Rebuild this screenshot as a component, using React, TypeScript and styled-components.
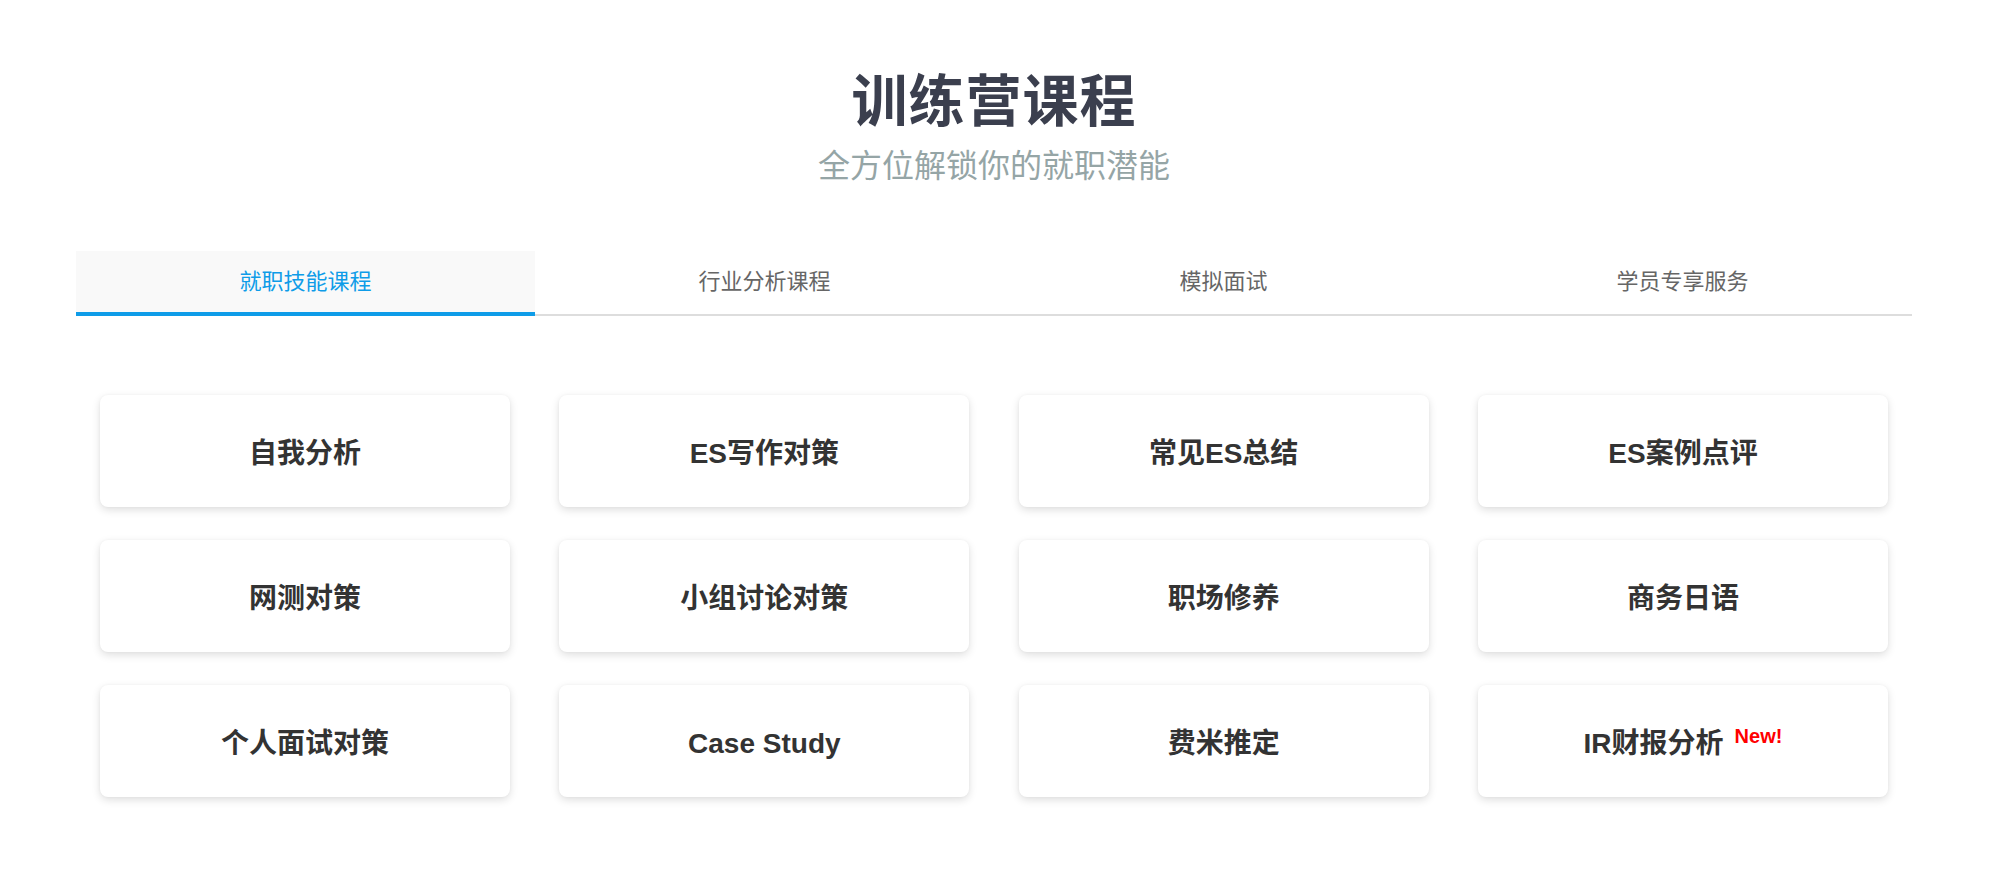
import React, { useState } from "react";
import styled, { createGlobalStyle } from "styled-components";

const GlobalStyle = createGlobalStyle`
  html, body {
    margin: 0;
    padding: 0;
    background: #ffffff;
  }
  body {
    font-family: "Noto Sans CJK SC", "Liberation Sans", sans-serif;
  }
  * { box-sizing: border-box; }
`;

const Page = styled.div`
  width: 1998px;
  padding: 68px 86px 60px 76px;
`;

const Header = styled.header`
  display: flex;
  flex-direction: column;
  align-items: center;
  gap: 10px;
`;

const Title = styled.h1`
  margin: 0;
  font-family: "Liberation Sans", "Noto Sans CJK SC", sans-serif;
  font-size: 56px;
  line-height: 68px;
  font-weight: 700;
  color: #3b3f4e;
  letter-spacing: 1px;
`;

const Subtitle = styled.p`
  margin: 0;
  font-family: "Liberation Sans", "Noto Sans CJK SC", sans-serif;
  font-size: 32px;
  line-height: 40px;
  font-weight: 400;
  color: #95a5a6;
`;

const TabBar = styled.nav`
  margin-top: 65px;
  display: grid;
  grid-template-columns: repeat(4, 1fr);
  border-bottom: 2px solid #dddddd;
`;

const Tab = styled.button<{ $active: boolean }>`
  height: 65px;
  margin-bottom: -2px;
  border: none;
  border-bottom: 4px solid ${(p) => (p.$active ? "#0e9ce8" : "transparent")};
  background: ${(p) => (p.$active ? "#f9f9f9" : "transparent")};
  color: ${(p) => (p.$active ? "#0e9ce8" : "#666666")};
  font-family: "Liberation Sans", "Noto Sans CJK SC", sans-serif;
  font-size: 22px;
  line-height: 30px;
  padding: 0;
  cursor: pointer;
`;

const Grid = styled.div`
  margin-top: 79px;
  padding: 0 24px;
  display: grid;
  grid-template-columns: repeat(4, 410px);
  justify-content: space-between;
  row-gap: 33px;
`;

const Card = styled.div`
  height: 112px;
  padding-top: 5px;
  border-radius: 8px;
  background: #ffffff;
  box-shadow: 0 3px 9px rgba(0, 0, 0, 0.13), 0 0 3px rgba(0, 0, 0, 0.04);
  display: flex;
  align-items: center;
  justify-content: center;
  gap: 11px;
`;

const CardLabel = styled.span`
  font-family: "Liberation Sans", "Noto Sans CJK SC", sans-serif;
  font-size: 28px;
  font-weight: 600;
  color: #333333;
  line-height: 36px;
`;

const Badge = styled.sup`
  font-family: "Liberation Sans", sans-serif;
  font-size: 20px;
  font-weight: 700;
  color: #ff0000;
  line-height: 20px;
  align-self: center;
  transform: translateY(-8px);
`;

const tabs = ["就职技能课程", "行业分析课程", "模拟面试", "学员专享服务"];

const courses: { label: string; isNew?: boolean }[] = [
  { label: "自我分析" },
  { label: "ES写作对策" },
  { label: "常见ES总结" },
  { label: "ES案例点评" },
  { label: "网测对策" },
  { label: "小组讨论对策" },
  { label: "职场修养" },
  { label: "商务日语" },
  { label: "个人面试对策" },
  { label: "Case Study" },
  { label: "费米推定" },
  { label: "IR财报分析", isNew: true },
];

export default function App() {
  const [active, setActive] = useState(0);
  return (
    <>
      <GlobalStyle />
      <Page>
        <Header>
          <Title>训练营课程</Title>
          <Subtitle>全方位解锁你的就职潜能</Subtitle>
        </Header>
        <TabBar>
          {tabs.map((t, i) => (
            <Tab key={t} $active={i === active} onClick={() => setActive(i)}>
              {t}
            </Tab>
          ))}
        </TabBar>
        <Grid>
          {courses.map((c) => (
            <Card key={c.label}>
              <CardLabel>{c.label}</CardLabel>
              {c.isNew && <Badge>New!</Badge>}
            </Card>
          ))}
        </Grid>
      </Page>
    </>
  );
}
